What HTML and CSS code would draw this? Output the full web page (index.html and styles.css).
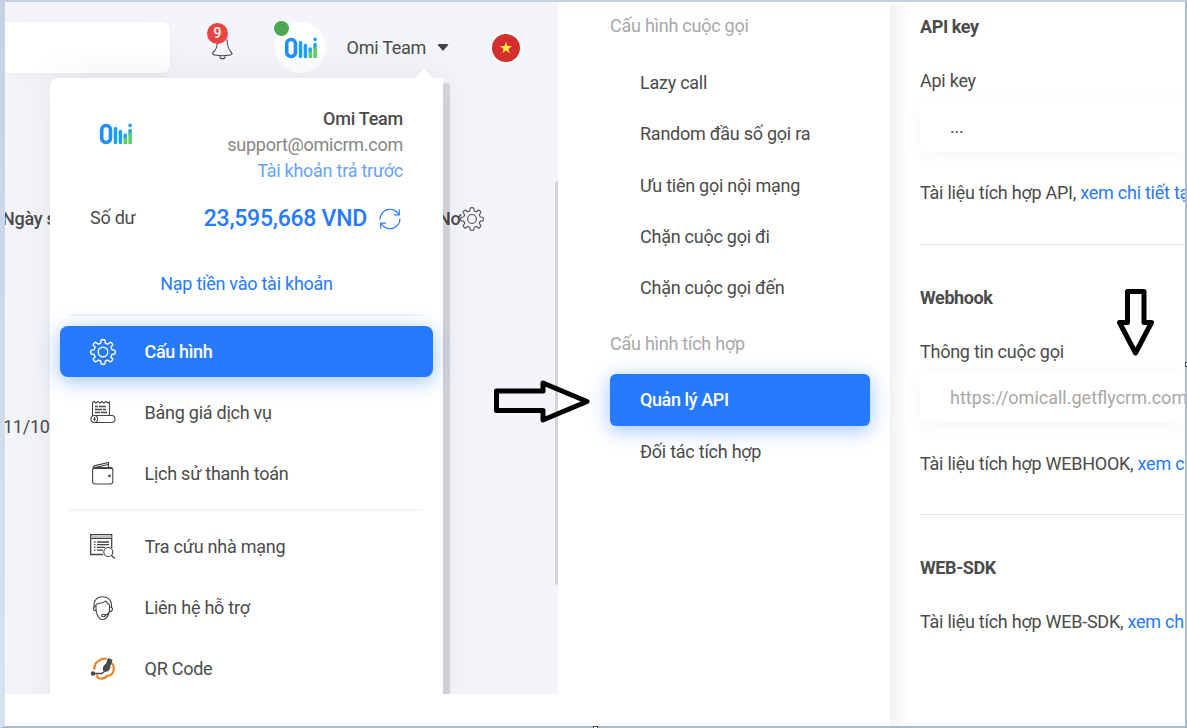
FILE: index.html
```html
<!DOCTYPE html>
<html lang="vi">
<head>
<meta charset="utf-8">
<title>Omi Team</title>
<link rel="stylesheet" href="styles.css">
</head>
<body>
<svg class="defs" width="0" height="0">
  <defs>
    <symbol id="logo" viewBox="0 0 34 22">
      <rect x="2.700" y="2.500" width="8.800" height="17" rx="4.2" fill="none" stroke="#1e90ff" stroke-width="3.600"/>
      <path d="M16.500 5.500v14M21.400 8.500v11M26.200 12v3M31.100 7.500v4" stroke="#18a0fb" stroke-width="3.500" stroke-linecap="round"/>
      <path d="M24.500 16.500l3.500-3.500v8h-3.500zM29.400 11.500l3.500-3.500V21h-3.500z" fill="#57d163"/>
      <circle cx="31.100" cy="2.400" r="1.800" fill="#18a0fb"/>
    </symbol>
    <symbol id="gear" viewBox="0 0 26 26">
      <path d="M10.600 4.200L11 1.500Q11.100.8 11.800.8h2.400q.7 0 .8.700l.4 2.700 2.300 1 2.200-1.700q.6-.4 1.100.1l1.500 1.500q.5.500.1 1.100l-1.700 2.200 1 2.300 2.600.4q.7.100.7.800v2.400q0 .7-.7.800l-2.600.400-1 2.300 1.700 2.200q.4.600-.1 1.100l-1.500 1.500q-.5.500-1.100.1l-2.200-1.700-2.300 1-.4 2.500q-.1.700-.8.700h-2.400q-.7 0-.8-.7l-.4-2.500-2.300-1-2.200 1.700q-.6.400-1.100-.1l-1.500-1.500q-.5-.5-.1-1.100l1.700-2.200-1-2.300-2.600-.4q-.7-.1-.7-.8v-2.400q0-.7.7-.8l2.600-.4 1-2.300-1.700-2.200q-.4-.6.100-1.100l1.500-1.500q.5-.5 1.100-.1l2.200 1.700z"/>
      <circle cx="13" cy="13" r="4.800"/>
    </symbol>
  </defs>
</svg>
<div class="frame">
  <section class="dashboard">
    <header class="topbar">
      <div class="search"></div>
      <div class="bell">
        <svg width="23" height="25" viewBox="0 0 23 25"><path d="M6 6c.5 6-.6 8.500-4 11.500-1 1.500.5 2.500 2 2.500 5 1 10 1 15 0 2-.3 2.500-1.300 1.500-2.500-3.300-3.300-4.200-6-4.500-13"/><path d="M8.800 21.300q.4 2.500 2.700 2.500t2.700-2.500"/></svg>
        <span class="badge">9</span>
      </div>
      <div class="avatar"><svg width="34" height="22"><use href="#logo"/></svg><i class="online"></i></div>
      <div class="account">Omi Team</div>
      <i class="caret"></i>
      <svg class="flag" width="32" height="32" viewBox="0 0 32 32"><circle cx="16" cy="16" r="16" fill="#fff"/><circle cx="16" cy="16" r="14" fill="#d32f2f"/><path d="M16 9.800l1.500 4.300h4.600l-3.700 2.800 1.400 4.400-3.800-2.700-3.800 2.700 1.400-4.400-3.700-2.800h4.600z" fill="#ffeb3b"/></svg>
    </header>
    <div class="table-head"><span class="col-date">Ngày s</span><span class="col-debt">Nơ</span><svg class="line-icon" width="24" height="24"><use href="#gear"/></svg></div>
    <div class="table-row">11/10/</div>
    <i class="page-scroll"></i>

    <div class="popup">
      <i class="pointer"></i>
      <i class="popup-scroll"></i>
      <div class="profile">
        <svg width="34" height="22"><use href="#logo"/></svg>
        <div class="identity">
          <strong>Omi Team</strong>
          <span class="email">support@omicrm.com</span>
          <span class="plan">Tài khoản trả trước</span>
        </div>
      </div>
      <div class="balance">
        <span>Số dư</span>
        <strong>23,595,668 VND</strong>
        <svg width="22" height="22" viewBox="0 0 22 22"><path d="M1 11.500A10 10 0 0 1 19.500 6M20.300 1.500v5.300h-5.200M21 10.500A10 10 0 0 1 2.500 16M1.700 20.500v-5.300h5.200"/></svg>
      </div>
      <a class="topup">Nạp tiền vào tài khoản</a>
      <nav>
        <hr>
        <a class="item active"><svg class="line-icon" width="26" height="26"><use href="#gear"/></svg><span>Cấu hình</span></a>
        <a class="item"><svg class="line-icon" width="26" height="26" viewBox="0 0 26 26"><path d="M2.500 15.500V2.500l1.500-1 2 1.500 2-1.500 2 1.500 2-1.500 2 1.500 2-1.500 2 1.500 1.500-1V15.500M4.500 22.500h17a3.500 3.500 0 0 0 0-7H4.500a3.500 3.500 0 0 0 0 7c4 0 4-7 0-7M4.500 17v4M3 19h3"/><path d="M5 6.500h3m1 0h7M5 9.500h7m1 0h3M5 12.500h5m1 0h6" stroke-width="1.500"/></svg><span>Bảng giá dịch vụ</span></a>
        <a class="item"><svg class="line-icon" width="26" height="26" viewBox="0 0 26 26"><rect x="2.600" y="6.500" width="20.200" height="16.500" rx="2.500"/><path d="M3 7q.3-2 2-2.400L18.500 1.500V6M5 6.500l13-3"/><path d="M3 7.500h19"/><rect x="18.800" y="14.200" width="1.300" height="1.300"/></svg><span>Lịch sử thanh toán</span></a>
        <hr>
        <a class="item"><svg class="line-icon" width="26" height="26" viewBox="0 0 26 26"><path d="M13 20.500H.700V.700h21V14M1 4.300h20.500" stroke-width="1.300"/><path d="M1 2.900h20.500" stroke="#bbb" stroke-width="2"/><path d="M4 8h1.500m1.500 0h12M4 10.700h1.500m1.500 0h12M4 13.400h1.500m1.500 0h8M4 16.100h1.500m1.500 0h6" stroke-width="1.300"/><circle cx="18.300" cy="18" r="4.500"/><path d="M21.600 21.500l3.300 3"/></svg><span>Tra cứu nhà mạng</span></a>
        <a class="item"><svg class="line-icon" width="26" height="26" viewBox="0 0 26 26"><path d="M4 13V9Q5 2 12.500 1.800T21.500 9v4M6 15V9.500l3-1.200Q13.500 8.300 15.500 6l4 4v6q-1.500 6-4 7.500-3 2-6 0Q6.500 20 6 15zM6 11q-2.500 0-2.500 2.500T6 15.500M20 12q2.500 0 2.500 2T20 16.500M20 16q-1 3.500-6 4"/><ellipse cx="13.500" cy="20.500" rx="2" ry="1.200"/></svg><span>Liên hệ hỗ trợ</span></a>
        <a class="item"><svg width="26" height="26" viewBox="0 0 26 26"><path d="M16.500 2.800Q12 2 9.500 4.500q-3.500 1.500-4.500 4.500l-1 4.500M7.500 18.500q-1.500 4 3 4 4.500.3 6.500-2.500 6.500-1 6.700-6.500.5-5-2.700-6.500" fill="none" stroke="#ee8326" stroke-width="2.200"/><path d="M3 17.500h9l3.500-3" fill="none" stroke="#4a4a4e" stroke-width="1.400"/><circle cx="3" cy="17.500" r="2.200" fill="#4a4a4e"/><path d="M18 2l4.500 1.800q-.3 3-2 5.200.3 4-2.600 6.200-3.400 1.300-5-1-.7-4.400 2.900-6.200z" fill="#4a4a4e"/></svg><span>QR Code</span></a>
      </nav>
    </div>
  </section>

  <aside class="settings">
    <h3>Cấu hình cuộc gọi</h3>
    <a>Lazy call</a>
    <a>Random đầu số gọi ra</a>
    <a>Ưu tiên gọi nội mạng</a>
    <a>Chặn cuộc gọi đi</a>
    <a>Chặn cuộc gọi đến</a>
    <h3 class="second">Cấu hình tích hợp</h3>
    <a class="active">Quản lý API</a>
    <a>Đối tác tích hợp</a>
  </aside>

  <main class="detail">
    <section>
      <h2>API key</h2>
      <label>Api key</label>
      <div class="field">...</div>
      <p>Tài liệu tích hợp API, <a>xem chi tiết tại</a></p>
    </section>
    <section>
      <h2>Webhook</h2>
      <label>Thông tin cuộc gọi</label>
      <div class="field muted">https://omicall.getflycrm.com</div>
      <p>Tài liệu tích hợp WEBHOOK, <a>xem c</a></p>
    </section>
    <section>
      <h2>WEB-SDK</h2>
      <p>Tài liệu tích hợp WEB-SDK, <a>xem ch</a></p>
    </section>
  </main>
</div>
<svg class="arrow arrow-right" width="98" height="46" viewBox="0 0 98 46"><path d="M3.500 13h46.500V5L94 23.500 50 42v-9.500H3.500z"/></svg>
<svg class="arrow arrow-down" width="40" height="70" viewBox="0 0 40 70"><path d="M12.500 3.500H29v31h7.500L20.500 65 4.500 34.500h8z"/></svg>
<i class="handle handle-right"></i>
<i class="handle handle-bottom"></i>
</body>
</html>
```

FILE: styles.css
```css
* { box-sizing: border-box; }
body {
  margin: 0;
  width: 1187px;
  height: 728px;
  overflow: hidden;
  position: relative;
  font: 18px/26px Roboto, sans-serif;
  letter-spacing: -0.25px;
  color: #4b4b4b;
  background: linear-gradient(#c8d1e2, #d9e3f0);
}
a { color: #267aff; }
.defs { position: absolute; }
.frame {
  display: flex;
  height: 728px;
  border: solid;
  border-width: 2px 2px 2px 5px;
  border-color: #c6d0e0 #b0bcd2 #abb9cd transparent;
  background: #fff;
  background-clip: padding-box;
}

/* Dashboard */
.dashboard {
  position: relative;
  width: 553px;
  height: 692px;
  overflow: hidden;
  flex: none;
  background: #f4f5fa;
}
.topbar { display: flex; align-items: center; padding-top: 20px; height: 71px; }
.search {
  width: 165px;
  height: 51px;
  background: #fff;
  border-radius: 0 8px 8px 0;
  box-shadow: 0 4px 20px rgba(0, 0, 0, .035);
}
.bell { position: relative; margin-left: 41px; width: 23px; height: 25px; }
.bell svg { display: block; fill: none; stroke: #444; stroke-width: 1.1; }
.badge {
  position: absolute;
  left: -4px;
  top: -12px;
  width: 21px;
  height: 21px;
  border-radius: 50%;
  background: #ea4440;
  color: #fff;
  font-size: 14px;
  font-weight: 500;
  line-height: 20px;
  text-align: center;
  letter-spacing: 0;
}
.avatar {
  position: relative;
  display: flex;
  align-items: center;
  margin-left: 41px;
  width: 51px;
  height: 51px;
  padding-left: 9px;
  border-radius: 50%;
  background: #fff;
}
.online {
  position: absolute;
  left: -1px;
  top: -1px;
  width: 15px;
  height: 15px;
  border-radius: 50%;
  background: #4ca750;
}
.account { margin-left: 20.500px; width: 90px; }
.caret { border: 6px solid transparent; border-top: 7px solid #444; border-bottom: 0; border-radius: 2px; }
.flag { margin-left: 41px; }
.table-head { display: flex; align-items: center; height: 26px; margin-top: 133px; }
.col-date { width: 436px; margin-left: -3px; font-weight: 500; }
.col-debt { width: 22px; font-weight: 500; }
.table-row { margin: 182px 0 0 -2px; }
.page-scroll {
  position: absolute;
  right: 0;
  top: 179px;
  width: 3px;
  height: 404px;
  border-radius: 3px 0 0 3px;
  background: #d1d3d6;
}
.line-icon { fill: none; stroke: #444; stroke-width: 1.1; }

/* Account popup */
.popup {
  position: absolute;
  left: 45px;
  top: 76px;
  width: 393px;
  height: 640px;
  padding-top: 28px;
  border-radius: 8px 0 0 0;
  background: #fff;
  box-shadow: 0 0 40px rgba(30, 30, 60, .07);
}
.pointer {
  position: absolute;
  left: 365px;
  top: -9px;
  border: 9px solid transparent;
  border-bottom-color: #fff;
  border-top: 0;
}
.popup-scroll {
  position: absolute;
  left: 393px;
  top: 5px;
  width: 7px;
  height: 640px;
  border-radius: 4px 4px 0 0;
  background: rgba(0, 0, 0, .12);
}
.profile { display: flex; justify-content: space-between; padding: 0 40px 0 49px; }
.profile svg { margin-top: 17px; }
.identity { display: flex; flex-direction: column; text-align: right; }
.identity strong { font-weight: 500; }
.email { color: #868686; }
.plan { color: #66a2ff; }
.balance { display: flex; align-items: center; height: 26px; margin-top: 22px; padding: 0 42px 0 40px; }
.balance span { margin-top: -2px; }
.balance strong { margin: 0 12px 0 auto; font-size: 23px; font-weight: 500; color: #267aff; }
.balance svg { fill: none; stroke: #267aff; stroke-width: 1.2; }
.topup { display: block; margin: 39px 0 17px; text-align: center; }
.popup nav { display: flex; flex-direction: column; gap: 10px; padding: 0 10px; }
.popup hr { margin: 0 10px 0 9px; height: 2px; border: 0; background: #f3f4f9; }
.item { display: flex; align-items: center; gap: 29px; height: 51px; padding-left: 29.5px; color: #4b4b4b; border-radius: 8px; }
.active { color: #fff; background: #267aff; font-weight: 500; box-shadow: 0 4px 20px rgba(38, 122, 255, .45); }
.item.active { letter-spacing: -0.35px; }
.active .line-icon { stroke: #fff; stroke-width: 1.4; }

/* Settings menu */
.settings { width: 332px; flex: none; padding: 11px 20px 0 52px; }
.settings h3 { margin: 0 0 18px; font-size: 18px; font-weight: 400; color: #a8a8a8; }
.settings a { display: block; height: 51.300px; line-height: 51.300px; padding-left: 30px; color: #4b4b4b; border-radius: 6px; }
.settings .second { margin: 17.500px 0; }
.settings .active { color: #fff; height: 52px; letter-spacing: -0.4px; }

/* Detail pane */
.detail {
  flex: 1;
  min-width: 0;
  margin-top: 2px;
  padding: 10px 0 0 30px;
  overflow: hidden;
  white-space: nowrap;
  background: linear-gradient(90deg, #f3f3f3, #fbfbfb 13px, #fff 22px);
}
.detail section { border-bottom: 1px solid #e5e5e5; margin-bottom: 40px; padding-bottom: 37.500px; }
.detail section:last-child { border: 0; }
.detail h2 { margin: 0 0 28px; font-size: 18px; font-weight: 700; letter-spacing: -0.4px; }
.detail label { display: block; margin-bottom: 7px; }
.detail p { margin: 0; }
.field {
  height: 51px;
  line-height: 51px;
  margin-bottom: 28px;
  padding-left: 30px;
  border-radius: 8px 0 0 8px;
  background: #fff;
  box-shadow: 0 4px 20px rgba(0, 0, 0, .045);
}
.muted { color: #a8a8a8; letter-spacing: 0; }

/* Annotation arrows and canvas handles */
.arrow { position: absolute; fill: none; stroke: #000; stroke-width: 5; stroke-linejoin: round; }
.arrow-right { left: 493px; top: 378px; }
.arrow-down { left: 1115px; top: 288px; }
.handle { position: absolute; width: 5px; height: 5px; border: 1px solid #444; background: #fff; }
.handle-right { left: 1185px; top: 362px; }
.handle-bottom { left: 593px; top: 726px; }
```
